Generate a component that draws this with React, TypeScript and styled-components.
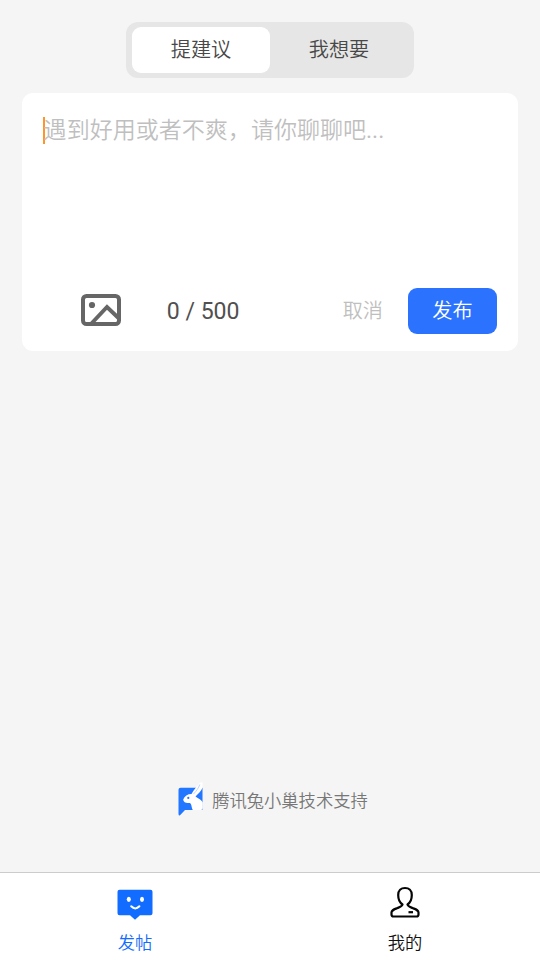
import React, { useState } from "react";
import styled, { createGlobalStyle } from "styled-components";

const GlobalStyle = createGlobalStyle`
  * { box-sizing: border-box; }
  body {
    margin: 0;
    background: #f5f5f5;
    font-family: Roboto, "Noto Sans CJK SC DemiLight", "Noto Sans CJK SC", sans-serif;
    font-weight: 350;
  }
  button { font: inherit; border: 0; padding: 0; background: none; cursor: pointer; }
`;

const Page = styled.div`
  display: flex;
  flex-direction: column;
  height: 960px;
  width: 540px;
  padding-top: 22px;
`;

const Segmented = styled.div`
  align-self: center;
  display: flex;
  width: 288px;
  height: 56px;
  padding: 5px 6px;
  border-radius: 12px;
  background: #e6e6e6;
`;

const Segment = styled.button<{ $active: boolean }>`
  flex: 1;
  height: 46px;
  border-radius: 9px;
  background: ${(p) => (p.$active ? "#fff" : "transparent")};
  color: #484848;
  font-size: 20.16px;
  line-height: 46px;
`;

const Card = styled.section`
  display: flex;
  flex-direction: column;
  justify-content: space-between;
  height: 258px;
  margin: 15px 22px 0;
  padding: 22px 21px 17px;
  border-radius: 11px;
  background: #fff;
`;

const Editor = styled.div`
  display: flex;
  align-items: center;
  height: 30px;
  color: #bfbfbf;
  font-size: 23.04px;
  line-height: 30px;
  white-space: nowrap;
`;

const Caret = styled.span`
  width: 2px;
  height: 27px;
  margin-right: -1.4px;
  background: #ff9429;
`;

const Placeholder = styled.span`
  margin-top: 1px;
`;

const Ellipsis = styled.span`
  font-weight: 400;
`;

const Actions = styled.div`
  display: flex;
  align-items: center;
  height: 46px;
  padding-left: 38px;
`;

const ImageIcon = styled.svg`
  width: 40px;
  height: 32px;
  margin-top: -2px;
`;

const Counter = styled.span`
  margin: 2px 0 0 45.8px;
  font-size: 23.04px;
  font-weight: 400;
  line-height: 30px;
  color: #505050;
`;

const Cancel = styled.button`
  margin-left: auto;
  margin-right: 25px;
  font-size: 20.16px;
  line-height: 46px;
  color: #bfbfbf;
`;

const Publish = styled.button`
  width: 89px;
  height: 46px;
  border-radius: 9px;
  background: #2b73ff;
  color: #fff;
  font-size: 20.16px;
  font-weight: 400;
  line-height: 46px;
`;

const Support = styled.footer`
  display: flex;
  justify-content: center;
  gap: 9px;
  margin: auto 0 55px 6px;
  height: 35px;
  color: #777;
  font-size: 17.28px;
  line-height: 38px;
`;

const RabbitLogo = styled.svg`
  width: 25px;
  height: 35px;
`;

const TabBar = styled.nav`
  display: flex;
  height: 88px;
  border-top: 1px solid #ccc;
  background: #fff;
`;

const TabItem = styled.button<{ $active: boolean }>`
  flex: 1;
  display: flex;
  flex-direction: column;
  align-items: center;
  padding-top: 11px;
  color: ${(p) => (p.$active ? "#126cff" : "#111")};
  font-size: 17.28px;
  line-height: 24px;
`;

const TabIcon = styled.svg`
  width: 38px;
  height: 36px;
  margin-bottom: 11px;
`;

const segments = ["提建议", "我想要"];

export default function App() {
  const [segment, setSegment] = useState(0);
  return (
    <>
      <GlobalStyle />
      <Page>
        <Segmented>
          {segments.map((label, i) => (
            <Segment key={label} $active={i === segment} onClick={() => setSegment(i)}>
              {label}
            </Segment>
          ))}
        </Segmented>
        <Card>
          <Editor>
            <Caret />
            <Placeholder>遇到好用或者不爽，请你聊聊吧<Ellipsis>...</Ellipsis></Placeholder>
          </Editor>
          <Actions>
            <ImageIcon viewBox="0 0 40 32" fill="none" stroke="#666" strokeWidth="4">
              <rect x="2" y="2" width="36" height="28" rx="3.5" />
              <circle cx="11" cy="11" r="3.1" fill="#666" stroke="none" />
              <path d="M10 30L26 13L38 24.500" />
            </ImageIcon>
            <Counter>0 / 500</Counter>
            <Cancel>取消</Cancel>
            <Publish>发布</Publish>
          </Actions>
        </Card>
        <Support>
          <RabbitLogo viewBox="0 0 25 35">
            <path d="M2.500 5.800H24.500V28H7L2 33.200Q.5 34 .5 32V7.800Q.5 5.800 2.500 5.800Z" fill="#2177ff" />
            <path
              d="M22 .8C19.500 4 15.500 8 13.500 12C9.500 12 6.500 14 5.200 17.500C5.500 20.500 8 21 12 21C14 22.500 13.200 25.500 14.800 28H23Q24.800 28 24.800 26V20.500C23.500 18 20.500 16.500 17.500 14.500C20.500 11.500 23.300 9 24.500 5.800V0Z"
              fill="#fff"
            />
            <path d="M21.800 2.500C20.500 6 18.500 9 15.500 12" fill="none" stroke="#a9c8ff" strokeWidth=".8" />
            <circle cx="10.300" cy="15.900" r="1.100" fill="#2177ff" />
          </RabbitLogo>
          <span>腾讯兔小巢技术支持</span>
        </Support>
        <TabBar>
          <TabItem $active>
            <TabIcon viewBox="0 0 38 36">
              <path
                d="M3.500 5.700H34.500Q36.500 5.700 36.500 7.700V29.200Q36.500 31.200 34.500 31.200H24L19 35.800L14 31.200H3.500Q1.500 31.200 1.500 29.200V7.700Q1.500 5.700 3.500 5.700Z"
                fill="#126cff"
              />
              <ellipse cx="12.800" cy="15.300" rx="2" ry="2.600" fill="#fff" />
              <ellipse cx="26" cy="15.300" rx="2" ry="2.600" fill="#fff" />
              <path d="M15.200 22.300Q19.300 26.500 23.400 22.300" fill="none" stroke="#fff" strokeWidth="2" strokeLinecap="round" />
            </TabIcon>
            发帖
          </TabItem>
          <TabItem $active={false}>
            <TabIcon viewBox="0 0 38 36" fill="none" stroke="#050505" strokeWidth="2.200" strokeLinejoin="round">
              <path d="M16.500 20.500C13.500 18.500 12.200 14.500 12.200 11C12.200 6.500 15 4 19 4S25.800 6.500 25.800 11C25.800 14.500 24.500 18.500 21.500 20.500C22 22.500 24 23 26.500 24C30.500 25.600 32.500 26.200 32.500 28.500V30.500Q32.500 32.500 30.500 32.500H7.500Q5.500 32.500 5.500 30.500V28.500C5.500 26.200 7.500 25.600 11.500 24C14 23 16 22.500 16.500 20.500Z" />
              <path d="M22.500 28.200H27" />
            </TabIcon>
            我的
          </TabItem>
        </TabBar>
      </Page>
    </>
  );
}
